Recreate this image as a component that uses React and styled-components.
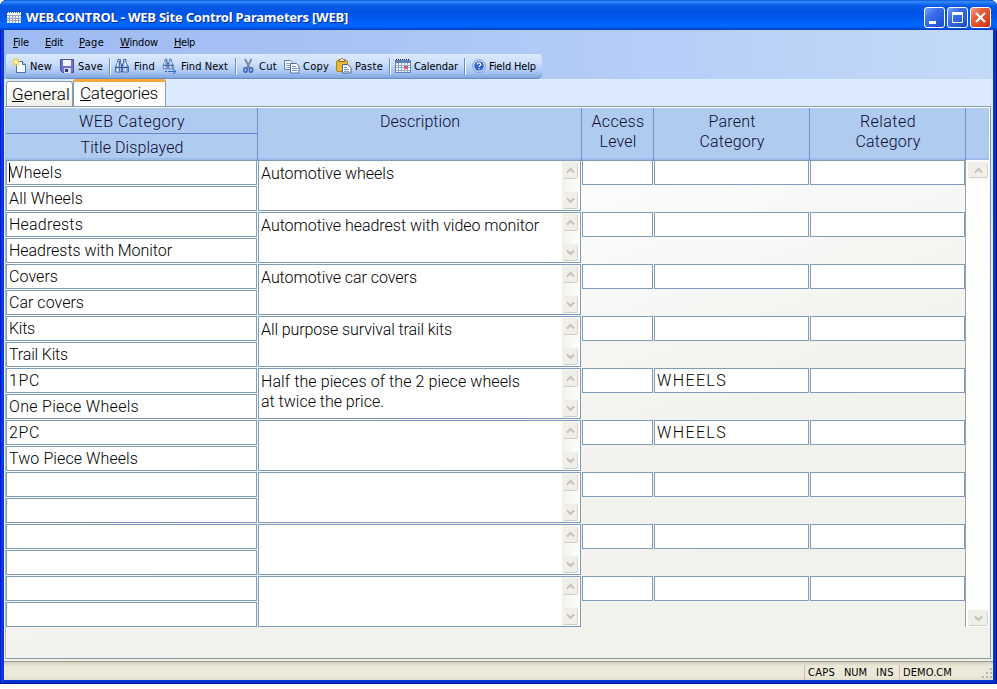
import React, { useLayoutEffect, useRef, useState } from "react";
import styled, { createGlobalStyle } from "styled-components";

const UI_FONT = '"DejaVu Sans Condensed", "Noto Sans", sans-serif';
const FORM_FONT = 'Roboto, "Liberation Sans", Arial, sans-serif';

const GlobalStyle = createGlobalStyle`
  html, body { margin: 0; padding: 0; background: #fff; overflow: hidden; }
  * { box-sizing: border-box; }
`;

const Frame = styled.div`
  width: 997px;
  height: 684px;
  display: flex;
  flex-direction: column;
  padding: 0 4px 4px;
  overflow: hidden;
  border-radius: 7px 7px 0 0;
  background: #0038dc;
  box-shadow: inset 1px 0 #0019cf, inset -1px 0 #00138c, inset 0 -1px #00138c,
    inset 3px 0 #0a3ae0, inset -3px 0 #0632c8, inset 0 -3px #0632c8;
  font-family: ${UI_FONT};
  color: #000;
`;

const TitleBar = styled.header`
  flex: 0 0 30px;
  margin: 0 -4px;
  padding: 4px 6px 0 7px;
  display: flex;
  align-items: center;
  background: linear-gradient(#0a56d8 0, #3c93ff 2px, #1f76f5 3px, #0759e6 6px, #0054e3 12px, #005bf2 19px, #0066ff 24px, #0062f8 27px, #0048d0 29px, #003dd0 30px);
`;

const TitleText = styled.h1`
  margin: 0 0 0 5px;
  flex: 1;
  font: bold 13px/20px "Noto Sans", "Open Sans", sans-serif;
  color: #fff;
  text-shadow: 1px 1px #0a2f9a;
`;

const CaptionButtons = styled.div`
  display: flex;
  gap: 2px;
`;

const CaptionButton = styled.button`
  width: 21px;
  height: 21px;
  padding: 0;
  border: 1px solid #fff;
  border-radius: 3px;
  background: ${(p) =>
    p.$close
      ? "linear-gradient(135deg, #f0a088 0, #e5603c 35%, #d9441c 75%, #b83208 100%)"
      : "linear-gradient(135deg, #7ba2f5 0, #3c6ee9 35%, #2a5ce0 70%, #1d48c8 100%)"};
  svg { display: block; }
`;

const MenuArea = styled.div`
  flex: 0 0 49px;
  background: linear-gradient(90deg, #9ebbf2 0, #a6c1f4 30%, #b8d0f8 70%, #c3daf7 100%);
`;

const MenuBar = styled.nav`
  height: 24px;
  display: flex;
  align-items: center;
  padding-left: 9px;
  gap: 16px;
  font-size: 11px;
`;

const ToolBar = styled.div`
  width: 536px;
  height: 25px;
  margin-left: 2px;
  display: flex;
  align-items: center;
  padding-left: 6px;
  border-radius: 2px 3px 5px 2px;
  border-bottom: 1px solid #6b8cc6;
  background: linear-gradient(#dce9fd 0, #cbdefb 40%, #a9c6f2 75%, #82a5df 100%);
  font-size: 11px;
`;

const ToolButton = styled.div`
  display: flex;
  align-items: center;
  gap: ${(p) => p.$gap}px;
  margin-right: ${(p) => p.$after}px;
  svg { display: block; flex: none; }
`;

const ToolSeparator = styled.div`
  width: 2px;
  height: 17px;
  margin-right: ${(p) => p.$after}px;
  border-left: 1px solid #6a8ccb;
  border-right: 1px solid #f1f9ff;
`;

const FitBox = styled.span`
  display: block;
  flex: none;
  width: ${(p) => p.$w}px;
  white-space: nowrap;
`;

const TabStrip = styled.div`
  flex: 0 0 27px;
  display: flex;
  align-items: flex-end;
  padding-left: 2px;
  background: #dbeafc;
  font: 300 17px/22px ${FORM_FONT};
`;

const Tab = styled.div`
  width: ${(p) => (p.$active ? 93 : 67)}px;
  height: ${(p) => (p.$active ? 27 : 25)}px;
  padding: ${(p) => (p.$active ? "0 0 0 6px" : "1px 0 0 5px")};
  border: 1px solid #919b9c;
  border-top: ${(p) => (p.$active ? "3px solid #f5a93c" : "1px solid #919b9c")};
  border-bottom: 0;
  border-radius: 3px 3px 0 0;
  background: ${(p) => (p.$active ? "#fdfdfd" : "linear-gradient(#fff, #f0f0ea)")};
`;

const PageWell = styled.div`
  flex: 0 0 555px;
  padding: 0 2px 2px 1px;
  background: linear-gradient(#dbeafc 0, #d3e3f8 60px, #f4f2ec 220px, #f1efe6 100%);
`;

const Page = styled.main`
  height: 553px;
  padding: 1px 1px 0 0;
  border: 1px solid #8a98a8;
  border-left-color: #b4bdc8;
  background: linear-gradient(160deg, #fff 0, #fbfbfb 35%, #f3f2ee 62%, #f2f1ec 100%);
`;

const COLUMNS = "252px 324px 72px 156px 156px 23px";

const HeaderRow = styled.div`
  display: grid;
  grid-template-columns: ${COLUMNS};
  height: 52px;
  font: 300 16px/20px ${FORM_FONT};
  color: #0a0a32;
`;

const HeaderCell = styled.div`
  padding: ${(p) => (p.$split ? "0" : "4px 0 0 1px")};
  display: flex;
  flex-direction: column;
  align-items: center;
  background: #b0cbf0;
  border-right: ${(p) => (p.$last ? "0" : "1px solid #6f92cd")};
  border-bottom: 1px solid #6488bd;
  box-shadow: inset 0 -2px #9dbbe8;
`;

const HeaderHalf = styled.div`
  width: 100%;
  height: 26px;
  padding: 4px 0 0 1px;
  display: flex;
  justify-content: center;
  border-bottom: ${(p) => (p.$top ? "1px solid #5f87c9" : "0")};
`;

const GridBody = styled.div`
  display: flex;
`;

const Records = styled.div`
  width: 959px;
  font: 300 16px/20px ${FORM_FONT};
`;

const Record = styled.div`
  display: grid;
  grid-template-columns: 251px 323px 71px 155px 155px;
  column-gap: 1px;
  height: 52px;
`;

const FieldPair = styled.div`
  display: flex;
  flex-direction: column;
  gap: 1px;
`;

const Field = styled.div`
  height: 25px;
  padding: 2px 0 0 2px;
  display: flex;
  border: 1px solid #7f9db9;
  background: #fff;
`;

const Caret = styled.i`
  width: 1px;
  height: 19px;
  margin: 0 -1px 0 0;
  background: #000;
`;

const Memo = styled.div`
  height: 51px;
  display: flex;
  justify-content: space-between;
  padding: 0 1px 0 2px;
  border: 1px solid #7f9db9;
  background: #fff;
`;

const MemoText = styled.div`
  padding-top: 3px;
`;

const MemoScroll = styled.div`
  width: 17px;
  display: flex;
  flex-direction: column;
  justify-content: space-between;
  padding: 1px;
  background: linear-gradient(90deg, #f3f1ec, #fefefb);
`;

const PageScroll = styled.div`
  width: 24px;
  height: 467px;
  display: flex;
  flex-direction: column;
  justify-content: space-between;
  align-items: center;
  padding: 2px 0 1px 1px;
  border-left: 1px solid #9aa2a8;
  background: #fefefc;
`;

const Arrow = styled.div`
  width: ${(p) => (p.$wide ? 20 : 15)}px;
  height: ${(p) => (p.$wide ? 16 : 17)}px;
  display: flex;
  align-items: center;
  justify-content: center;
  border: 1px solid #efede5;
  border-right-color: #d6d4ca;
  border-bottom-color: #cfcdc3;
  border-radius: 2px;
  background: #f0efe8;
`;

const StatusBar = styled.footer`
  flex: 1;
  display: flex;
  align-items: center;
  justify-content: flex-end;
  border-top: 1px solid #9d9b90;
  background: linear-gradient(#d0cdc0 0, #ece9d8 4px, #ece9d8 14px, #e2dfcf 100%);
  font-size: 11px;
`;

const StatusPane = styled.div`
  height: 15px;
  display: flex;
  align-items: center;
  gap: 9px;
  width: ${(p) => p.$w}px;
  margin-top: 2px;
  padding-left: 3px;
  border-left: 1px solid #c5c2b2;
  line-height: 15px;
`;

const Grip = styled.svg`
  align-self: flex-end;
  margin: 0 0 1px 0;
`;

/* Spaces letters so that a run of text fills exactly w pixels. */
function Fit({ w, underline, children }) {
  const ref = useRef(null);
  const [spacing, setSpacing] = useState(0);
  useLayoutEffect(() => {
    const natural = ref.current.getBoundingClientRect().width;
    setSpacing((w - natural) / children.length);
  }, [w, children]);
  return (
    <FitBox $w={w}>
      <span ref={ref} style={{ letterSpacing: spacing }}>
        {underline ? <u>{children[0]}</u> : children[0]}
        {children.slice(1)}
      </span>
    </FitBox>
  );
}

function NewIcon() {
  return (
    <svg width="15" height="16" viewBox="0 0 15 16">
      <path d="M4.500 3.500h6l3 3v8h-9z" fill="#f4f8ff" stroke="#5270a8" />
      <path d="M10.500 3.500v3h3" fill="#c6d6f0" stroke="#5270a8" />
      <path d="M4 0v8M0 4h8M1 1l6 6M7 1L1 7" stroke="#f0cf3c" strokeWidth="1.300" />
      <circle cx="4" cy="4" r="1.800" fill="#fffbd0" />
    </svg>
  );
}

function SaveIcon() {
  return (
    <svg width="15" height="15" viewBox="0 0 15 15">
      <path d="M.5 .5h13v13h-11l-2-2z" fill="#6d74d0" stroke="#4a50aa" />
      <path d="M3 1h8v6H3z" fill="#f3f6ff" />
      <path d="M4 9h7v5H4z" fill="#d7dbe8" />
      <path d="M5 10h3v3H5z" fill="#33397c" />
    </svg>
  );
}

function Binoculars() {
  return (
    <>
      <path d="M4 1.500h2.500v3l1 2v7.500h-6v-5l2-4.500zM9.500 1.500H12v3l2.500 4.500v5h-6V6.500l1-2z" fill="#a9c4ee" stroke="#4a6ca8" />
      <path d="M1.500 9.500h6M8.500 9.500h6M7 7h2" stroke="#2f4f88" />
      <path d="M3.500 5v3M11.500 5v3M3.500 10.500v3M11.500 10.500v3" stroke="#fff" />
      <path d="M5.500 3v10M13 8v5" stroke="#4a6ca8" />
    </>
  );
}

function FindIcon({ next }) {
  return (
    <svg width="16" height="16" viewBox="0 0 16 16">
      {next ? (
        <>
          <g transform="scale(.78)"><Binoculars /></g>
          <path d="M3 13.500h2M6 13.500h8M11 11l3 2.500-3 2.500" fill="none" stroke="#3164c8" />
        </>
      ) : (
        <Binoculars />
      )}
    </svg>
  );
}

function CutIcon() {
  return (
    <svg width="13" height="16" viewBox="0 0 13 16">
      <path d="M3 1l4.500 9M9.500 1L5 10" stroke="#7c8aa2" strokeWidth="1.900" />
      <ellipse cx="3.500" cy="12" rx="1.700" ry="2.200" fill="none" stroke="#3b62ac" strokeWidth="1.500" />
      <ellipse cx="9" cy="12" rx="1.700" ry="2.200" fill="none" stroke="#3b62ac" strokeWidth="1.500" />
    </svg>
  );
}

function CopyIcon() {
  return (
    <svg width="16" height="15" viewBox="0 0 16 15">
      <path d="M.5 1.500h6l2 2v7h-8z" fill="#f6faff" stroke="#6582b8" />
      <path d="M2 4.500h4M2 6.500h4M2 8.500h4" stroke="#8aa7d8" />
      <path d="M6.500 4.500h6l2.500 2.500v7h-8.500z" fill="#f6faff" stroke="#5270a8" />
      <path d="M8 7.500h4M8 9.500h5.500M8 11.500h5.500" stroke="#6c93d2" />
    </svg>
  );
}

function PasteIcon() {
  return (
    <svg width="16" height="16" viewBox="0 0 16 16">
      <rect x=".5" y="2.500" width="11" height="11" rx="1" fill="#e6b93a" stroke="#a8842c" />
      <path d="M3 3.500h6v-2H7.500l-1-1h-1l-1 1H3z" fill="#f5e9b5" stroke="#7c6630" />
      <path d="M6.500 6.500h5l3.500 3v5.500H6.500z" fill="#f2f6ff" stroke="#50648f" />
      <path d="M8 9.500h3M8 11.500h5M8 13.500h5" stroke="#7c98cc" />
    </svg>
  );
}

function CalendarIcon() {
  return (
    <svg width="16" height="16" viewBox="0 0 16 16">
      <rect x=".5" y="2.500" width="15" height="12" fill="#fff" stroke="#6482b8" />
      <path d="M1 4h14" stroke="#5b80c8" strokeWidth="2" />
      <path d="M1 1.500h14" stroke="#222" strokeDasharray="1 1" />
      <path d="M1 7.500h14M1 9.500h14M1 12.500h14M3.500 5v9M6.500 5v9M9.500 5v9M12.500 5v9" stroke="#8ba6d8" />
      <path d="M9 8h4v3H9z" fill="#d86060" />
    </svg>
  );
}

function HelpIcon() {
  return (
    <svg width="14" height="14" viewBox="0 0 14 14">
      <circle cx="7" cy="7" r="6.300" fill="#edf4ff" stroke="#6e8fcb" />
      <circle cx="7" cy="7" r="4.800" fill="#2e62ce" />
      <path d="M5.300 5.500c0-2.200 3.500-2.200 3.500 0 0 1.300-1.800 1.200-1.800 2.600M7 9.300v1.200" fill="none" stroke="#fff" strokeWidth="1.300" />
    </svg>
  );
}

function AppIcon() {
  return (
    <svg width="14" height="13" viewBox="0 0 14 13">
      <path d="M0 1h14v11H0z" fill="#f4f7fd" />
      <path d="M0 1.500h14" stroke="#4b5870" strokeDasharray="1 1" />
      <path d="M0 4.500h14M0 7.500h14M0 9.500h14M2.500 4v8M5.500 4v8M8.500 4v8M11.500 4v8" stroke="#97a4c2" />
    </svg>
  );
}

function Chevron({ down }) {
  return (
    <svg width="9" height="7" viewBox="0 0 9 7">
      <path d={down ? "M1 1.500l3.500 3.500L8 1.500" : "M1 5.500L4.500 2 8 5.500"} fill="none" stroke="#c6c4ba" strokeWidth="2" />
    </svg>
  );
}

const MENUS = [["File", 16], ["Edit", 18], ["Page", 25], ["Window", 38], ["Help", 21]];

const RECORDS = [
  { id: ["Wheels", 53], title: ["All Wheels", 74], text: [["Automotive wheels", 133]] },
  { id: ["Headrests", 74], title: ["Headrests with Monitor", 163], text: [["Automotive headrest with video monitor", 278]] },
  { id: ["Covers", 49], title: ["Car covers", 75], text: [["Automotive car covers", 156]] },
  { id: ["Kits", 26], title: ["Trail Kits", 59], text: [["All purpose survival trail kits", 191]] },
  { id: ["1PC", 31], title: ["One Piece Wheels", 130], text: [["Half the pieces of the 2 piece wheels", 259], ["at twice the price.", 123]], parent: "WHEELS" },
  { id: ["2PC", 31], title: ["Two Piece Wheels", 129], text: [], parent: "WHEELS" },
  { text: [] },
  { text: [] },
  { text: [] },
];

const HEADINGS = [
  [["Description", 80]],
  [["Access", 53], ["Level", 37]],
  [["Parent", 47], ["Category", 65]],
  [["Related", 56], ["Category", 65]],
];

export default function App() {
  return (
    <>
      <GlobalStyle />
      <Frame>
        <TitleBar>
          <AppIcon />
          <TitleText><Fit w={322}>WEB.CONTROL - WEB Site Control Parameters [WEB]</Fit></TitleText>
          <CaptionButtons>
            <CaptionButton>
              <svg width="19" height="19"><path d="M4 13h7v3H4z" fill="#fff" /></svg>
            </CaptionButton>
            <CaptionButton>
              <svg width="19" height="19"><path d="M4.500 5.500h10v9h-10zM4 5h11" fill="none" stroke="#fff" /><path d="M4 5.500h11" stroke="#fff" strokeWidth="3" /></svg>
            </CaptionButton>
            <CaptionButton $close>
              <svg width="19" height="19"><path d="M5 5l9 9M14 5l-9 9" stroke="#fff" strokeWidth="2.200" /></svg>
            </CaptionButton>
          </CaptionButtons>
        </TitleBar>

        <MenuArea>
          <MenuBar>
            {MENUS.map(([name, w]) => <Fit key={name} w={w} underline>{name}</Fit>)}
          </MenuBar>
          <ToolBar>
            <ToolButton $gap={3} $after={8}><NewIcon /><Fit w={22}>New</Fit></ToolButton>
            <ToolButton $gap={3} $after={6}><SaveIcon /><Fit w={25}>Save</Fit></ToolButton>
            <ToolSeparator $after={3} />
            <ToolButton $gap={4} $after={7}><FindIcon /><Fit w={21}>Find</Fit></ToolButton>
            <ToolButton $gap={3} $after={7}><FindIcon next /><Fit w={47}>Find Next</Fit></ToolButton>
            <ToolSeparator $after={5} />
            <ToolButton $gap={4} $after={7}><CutIcon /><Fit w={18}>Cut</Fit></ToolButton>
            <ToolButton $gap={3} $after={7}><CopyIcon /><Fit w={26}>Copy</Fit></ToolButton>
            <ToolButton $gap={3} $after={6}><PasteIcon /><Fit w={28}>Paste</Fit></ToolButton>
            <ToolSeparator $after={4} />
            <ToolButton $gap={3} $after={6}><CalendarIcon /><Fit w={44}>Calendar</Fit></ToolButton>
            <ToolSeparator $after={6} />
            <ToolButton $gap={3} $after={0}><HelpIcon /><Fit w={47}>Field Help</Fit></ToolButton>
          </ToolBar>
        </MenuArea>

        <TabStrip>
          <Tab><Fit w={58} underline>General</Fit></Tab>
          <Tab $active><Fit w={78} underline>Categories</Fit></Tab>
        </TabStrip>

        <PageWell>
          <Page>
            <HeaderRow>
              <HeaderCell $split>
                <HeaderHalf $top><Fit w={106}>WEB Category</Fit></HeaderHalf>
                <HeaderHalf><Fit w={103}>Title Displayed</Fit></HeaderHalf>
              </HeaderCell>
              {HEADINGS.map((lines) => (
                <HeaderCell key={lines[0][0]}>
                  {lines.map(([t, w]) => <Fit key={t} w={w}>{t}</Fit>)}
                </HeaderCell>
              ))}
              <HeaderCell $last />
            </HeaderRow>
            <GridBody>
              <Records>
                {RECORDS.map((r, i) => (
                  <Record key={i}>
                    <FieldPair>
                      <Field>
                        {i === 0 && <Caret />}
                        {r.id && <Fit w={r.id[1]}>{r.id[0]}</Fit>}
                      </Field>
                      <Field>{r.title && <Fit w={r.title[1]}>{r.title[0]}</Fit>}</Field>
                    </FieldPair>
                    <Memo>
                      <MemoText>
                        {r.text.map(([t, w]) => <Fit key={t} w={w}>{t}</Fit>)}
                      </MemoText>
                      <MemoScroll>
                        <Arrow><Chevron /></Arrow>
                        <Arrow><Chevron down /></Arrow>
                      </MemoScroll>
                    </Memo>
                    <Field />
                    <Field>{r.parent && <Fit w={70}>{r.parent}</Fit>}</Field>
                    <Field />
                  </Record>
                ))}
              </Records>
              <PageScroll>
                <Arrow $wide><Chevron /></Arrow>
                <Arrow $wide><Chevron down /></Arrow>
              </PageScroll>
            </GridBody>
          </Page>
        </PageWell>

        <StatusBar>
          <StatusPane $w={95}>
            <Fit w={27}>CAPS</Fit>
            <Fit w={23}>NUM</Fit>
            <Fit w={18}>INS</Fit>
          </StatusPane>
          <StatusPane $w={82}><Fit w={49}>DEMO.CM</Fit></StatusPane>
          <Grip width="12" height="12">
            <path d="M9 1h2v2H9zM5 5h2v2H5zM9 5h2v2H9zM1 9h2v2H1zM5 9h2v2H5zM9 9h2v2H9z" fill="#b8b4a2" />
          </Grip>
        </StatusBar>
      </Frame>
    </>
  );
}
